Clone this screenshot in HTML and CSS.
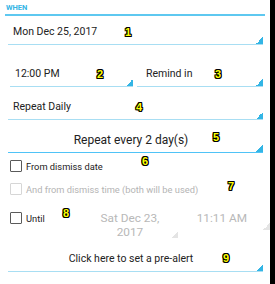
FILE: index.html
```html
<!DOCTYPE html>
<html lang="en">
  <head>
    <meta charset="UTF-8" />
    <meta name="viewport" content="width=device-width, initial-scale=1.0" />
    <title>Reminder - When</title>
    <link rel="stylesheet" href="styles.css">
  </head>
  <body>
    <div class="page">
      <h2 class="section-title">WHEN</h2>

      <div class="spinner row-date">Mon Dec 25, 2017</div>

      <div class="spinner-pair">
        <div class="spinner">12:00 PM</div>
        <div class="spinner remind">Remind in</div>
      </div>

      <div class="spinner row-repeat">Repeat Daily</div>

      <div class="spinner centered active">Repeat every 2 day(s)</div>

      <label class="check">
        <span class="box"></span>
        From dismiss date
      </label>
      <label class="check disabled">
        <span class="box"></span>
        And from dismiss time (both will be used)
      </label>

      <div class="until-row">
        <label class="check until">
          <span class="box"></span>
          Until
        </label>
        <div class="spinner off until-date">Sat Dec 23,<br />2017</div>
        <div class="spinner off until-time">11:11 AM</div>
      </div>

      <div class="spinner centered prealert">Click here to set a pre-alert</div>

      <!-- numbered markers drawn over the screenshot -->
      <span class="mark m1">1</span>
      <span class="mark m2">2</span>
      <span class="mark m3">3</span>
      <span class="mark m4">4</span>
      <span class="mark m5">5</span>
      <span class="mark m6">6</span>
      <span class="mark m7">7</span>
      <span class="mark m8">8</span>
      <span class="mark m9">9</span>
    </div>
  </body>
</html>
```

FILE: styles.css
```css
/* Reminder "when" form */
html {
  background: #000;
}

body {
  margin: 0;
  padding: 0;
  font-family: "Roboto", "Liberation Sans", sans-serif;
  color: #222;
}

.page {
  position: relative;
  width: 270px;
  min-height: 284px;
  background: #fff;
  display: flex;
  flex-direction: column;
}

.section-title {
  margin: 0 5px;
  padding: 4px 1px 0;
  height: 10px;
  font-size: 7.5px;
  font-weight: bold;
  color: #33b5e5;
  line-height: 8px;
  border-bottom: 2px solid #5ec8f0;
}

.spinner {
  height: 24px;
  line-height: 24px;
  padding-left: 5px;
  font-size: 10.5px;
  white-space: nowrap;
  border-bottom: 1px solid #a8def3;
  background: linear-gradient(135deg, transparent 50%, #33b5e5 50%) no-repeat right bottom / 7px 7px;
}

.row-date {
  margin: 4px 7px 0 8px;
}

.spinner-pair {
  display: grid;
  grid-template-columns: 123px 1fr;
  gap: 4px;
  margin: 17px 7px 0 10px;
}

.spinner-pair .remind {
  padding-left: 9px;
}

.row-repeat {
  margin: 8px 7px 0 8px;
}

.centered {
  text-align: center;
  padding-left: 0;
  padding-right: 9px;
}

.active {
  margin: 8px 7px 0 8px;
  font-size: 12px;
  border-bottom-color: #4fc3f7;
}

.check {
  display: flex;
  align-items: center;
  gap: 4px;
  height: 20px;
  margin: 3px 0 0 10px;
  font-size: 9.3px;
  color: #222;
}

.box {
  box-sizing: border-box;
  width: 12px;
  height: 12px;
  border: 1.5px solid #5a5a5a;
  border-radius: 1px;
}

.check.disabled {
  color: #b4b4b4;
}

.check.disabled .box {
  border-color: #d6d6d6;
}

.until-row {
  display: flex;
  margin-top: 12px;
  height: 28px;
}

.check.until {
  margin: 0 0 0 10px;
  height: 14px;
  width: 85px;
}

.spinner.off {
  border-bottom: none;
  color: #b8b8b8;
  font-size: 11.8px;
  line-height: 14px;
  text-align: center;
  padding: 0 9px 0 0;
  background-image: linear-gradient(135deg, transparent 50%, #e4e4e4 50%);
}

.until-date {
  width: 81px;
  height: 27px;
}

.until-time {
  width: 82px;
  height: 19px;
  margin-left: 5px;
}

.prealert {
  margin: 8px 7px 0 8px;
}

.mark {
  position: absolute;
  font-family: "Liberation Sans", sans-serif;
  font-weight: bold;
  font-size: 11px;
  line-height: 11px;
  color: #ffff00;
  text-shadow: -1px 0 #000, 1px 0 #000, 0 -1px #000, 0 1px #000,
    -1px -1px #000, 1px 1px #000, -1px 1px #000, 1px -1px #000;
}

.m1 { left: 125px; top: 27px; }
.m2 { left: 97px; top: 69px; }
.m3 { left: 215px; top: 69px; }
.m4 { left: 136px; top: 102px; }
.m5 { left: 213px; top: 132px; }
.m6 { left: 142px; top: 156px; }
.m7 { left: 228px; top: 181px; }
.m8 { left: 63px; top: 208px; }
.m9 { left: 223px; top: 253px; }
```
